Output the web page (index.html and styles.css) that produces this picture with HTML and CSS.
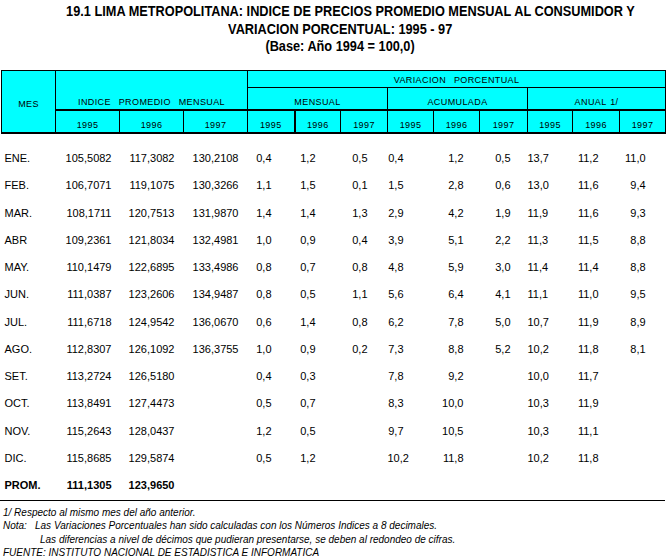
FILE: index.html
```html
<!DOCTYPE html>
<html lang="es">
<head>
<meta charset="utf-8">
<title>19.1 Lima Metropolitana: Indice de Precios</title>
<link rel="stylesheet" href="styles.css">
</head>
<body>
<div class="title">
  <div class="tline t1"><span>19.1 LIMA METROPOLITANA: INDICE DE PRECIOS PROMEDIO MENSUAL AL CONSUMIDOR Y</span></div>
  <div class="tline"><span>VARIACION PORCENTUAL: 1995 - 97</span></div>
  <div class="tline"><span>(Base: Año 1994 = 100,0)</span></div>
</div>
<table class="grid">
  <colgroup>
    <col class="c-mes"><col class="c-idx"><col class="c-idx"><col class="c-idx">
    <col class="c-47"><col class="c-46"><col class="c-47">
    <col class="c-46"><col class="c-46"><col class="c-48">
    <col class="c-45"><col class="c-47"><col class="c-46">
  </colgroup>
  <thead>
    <tr class="h1">
      <th rowspan="3" class="mes">MES</th>
      <th rowspan="2" colspan="3" class="ipm">INDICE&nbsp; PROMEDIO&nbsp; MENSUAL</th>
      <th colspan="9" class="vp">VARIACION&nbsp; PORCENTUAL</th>
    </tr>
    <tr class="h2">
      <th colspan="3">MENSUAL</th>
      <th colspan="3">ACUMULADA</th>
      <th colspan="3">ANUAL 1/</th>
    </tr>
    <tr class="h3">
      <th>1995</th><th>1996</th><th>1997</th>
      <th class="thick">1995</th><th>1996</th><th>1997</th>
      <th>1995</th><th>1996</th><th>1997</th>
      <th>1995</th><th>1996</th><th>1997</th>
    </tr>
  </thead>
  <tbody>
    <tr class="spacer"><td colspan="13"></td></tr>
    <tr><td>ENE.</td><td>105,5082</td><td>117,3082</td><td>130,2108</td><td>0,4</td><td>1,2</td><td>0,5</td><td>0,4</td><td>1,2</td><td>0,5</td><td>13,7</td><td>11,2</td><td>11,0</td></tr>
    <tr><td>FEB.</td><td>106,7071</td><td>119,1075</td><td>130,3266</td><td>1,1</td><td>1,5</td><td>0,1</td><td>1,5</td><td>2,8</td><td>0,6</td><td>13,0</td><td>11,6</td><td>9,4</td></tr>
    <tr><td>MAR.</td><td>108,1711</td><td>120,7513</td><td>131,9870</td><td>1,4</td><td>1,4</td><td>1,3</td><td>2,9</td><td>4,2</td><td>1,9</td><td>11,9</td><td>11,6</td><td>9,3</td></tr>
    <tr><td>ABR</td><td>109,2361</td><td>121,8034</td><td>132,4981</td><td>1,0</td><td>0,9</td><td>0,4</td><td>3,9</td><td>5,1</td><td>2,2</td><td>11,3</td><td>11,5</td><td>8,8</td></tr>
    <tr><td>MAY.</td><td>110,1479</td><td>122,6895</td><td>133,4986</td><td>0,8</td><td>0,7</td><td>0,8</td><td>4,8</td><td>5,9</td><td>3,0</td><td>11,4</td><td>11,4</td><td>8,8</td></tr>
    <tr><td>JUN.</td><td>111,0387</td><td>123,2606</td><td>134,9487</td><td>0,8</td><td>0,5</td><td>1,1</td><td>5,6</td><td>6,4</td><td>4,1</td><td>11,1</td><td>11,0</td><td>9,5</td></tr>
    <tr><td>JUL.</td><td>111,6718</td><td>124,9542</td><td>136,0670</td><td>0,6</td><td>1,4</td><td>0,8</td><td>6,2</td><td>7,8</td><td>5,0</td><td>10,7</td><td>11,9</td><td>8,9</td></tr>
    <tr><td>AGO.</td><td>112,8307</td><td>126,1092</td><td>136,3755</td><td>1,0</td><td>0,9</td><td>0,2</td><td>7,3</td><td>8,8</td><td>5,2</td><td>10,2</td><td>11,8</td><td>8,1</td></tr>
    <tr><td>SET.</td><td>113,2724</td><td>126,5180</td><td></td><td>0,4</td><td>0,3</td><td></td><td>7,8</td><td>9,2</td><td></td><td>10,0</td><td>11,7</td><td></td></tr>
    <tr><td>OCT.</td><td>113,8491</td><td>127,4473</td><td></td><td>0,5</td><td>0,7</td><td></td><td>8,3</td><td>10,0</td><td></td><td>10,3</td><td>11,9</td><td></td></tr>
    <tr><td>NOV.</td><td>115,2643</td><td>128,0437</td><td></td><td>1,2</td><td>0,5</td><td></td><td>9,7</td><td>10,5</td><td></td><td>10,3</td><td>11,1</td><td></td></tr>
    <tr><td>DIC.</td><td>115,8685</td><td>129,5874</td><td></td><td>0,5</td><td>1,2</td><td></td><td>10,2</td><td>11,8</td><td></td><td>10,2</td><td>11,8</td><td></td></tr>
    <tr class="prom"><td>PROM.</td><td>111,1305</td><td>123,9650</td><td></td><td></td><td></td><td></td><td></td><td></td><td></td><td></td><td></td><td></td></tr>
  </tbody>
</table>
<div class="rule"></div>
<div class="notes">
  <div class="note">1/ Respecto al mismo mes del año anterior.</div>
  <div class="note nota"><span class="lbl">Nota:</span><span>Las Variaciones Porcentuales han sido calculadas con los Números Indices a 8 decimales.</span></div>
  <div class="note indent">Las diferencias a nivel de décimos que pudieran presentarse, se deben al redondeo de cifras.</div>
  <div class="note">FUENTE: INSTITUTO NACIONAL DE ESTADISTICA E INFORMATICA</div>
</div>
</body>
</html>
```

FILE: styles.css
```css
html, body {
  margin: 0;
  padding: 0;
  background: #ffffff;
  color: #000000;
  font-family: "Liberation Sans", Arial, sans-serif;
}

.title {
  margin-top: 3px;
  padding-left: 13px;
  text-align: center;
  font-family: "Liberation Sans", Arial, sans-serif;
  font-weight: bold;
  font-size: 14px;
  line-height: 17.5px;
  white-space: nowrap;
}

.tline span {
  display: inline-block;
  transform: scaleX(0.91);
  transform-origin: center;
}

.title .t1 {
  padding-left: 20px;
}

.grid {
  margin: 14px 0 0 1px;
  border-collapse: collapse;
  table-layout: fixed;
  width: 664px;
}

.c-mes { width: 54px; }
.c-idx { width: 64px; }
.c-45 { width: 45px; }
.c-46 { width: 46px; }
.c-47 { width: 47px; }
.c-48 { width: 48px; }

.grid thead th {
  background: #00ffff;
  border: 1px solid #000000;
  font-weight: normal;
  font-size: 9px;
  letter-spacing: 0.4px;
  word-spacing: 1px;
  padding: 0;
  text-align: center;
  white-space: nowrap;
  line-height: 9px;
  color: #000;
}

.grid .h1 { height: 17px; }
.grid .h2 { height: 23px; }
.grid .h3 { height: 23px; }

.grid .h2 th { vertical-align: bottom; padding-bottom: 2px; border-bottom: 2px solid #000; }
.grid .h3 th { vertical-align: bottom; padding-bottom: 2px; border-bottom: 2px solid #000; }

.grid th.mes { vertical-align: middle; padding-top: 6px; border-bottom: 2px solid #000; }
.grid th.ipm { vertical-align: bottom; padding-bottom: 2px; border-bottom: 2px solid #000; }
.grid th.vp { vertical-align: middle; padding-top: 4px; }
.grid th.thick { border-right: 2px solid #000; }

.grid tbody td {
  font-size: 11px;
  height: 27.25px;
  padding: 0;
  text-align: right;
  vertical-align: middle;
  white-space: nowrap;
  line-height: 12px;
}

.grid tbody tr.spacer td { height: 10.5px; }

.grid tbody td:nth-child(1) { text-align: left; padding-left: 3px; }
.grid tbody td:nth-child(2) { padding-right: 8px; }
.grid tbody td:nth-child(3) { padding-right: 9px; }
.grid tbody td:nth-child(4) { padding-right: 9px; }
.grid tbody td:nth-child(5) { padding-right: 23px; }
.grid tbody td:nth-child(6) { padding-right: 25px; }
.grid tbody td:nth-child(7) { padding-right: 20px; }
.grid tbody td:nth-child(8) { padding-right: 30px; }
.grid tbody td:nth-child(9) { padding-right: 16px; }
.grid tbody td:nth-child(10) { padding-right: 17px; }
.grid tbody td:nth-child(11) { padding-right: 25px; }
.grid tbody td:nth-child(12) { padding-right: 21px; }
.grid tbody td:nth-child(13) { padding-right: 20px; }

.grid tr.prom td { font-weight: bold; }

.rule {
  margin-top: 1px;
  width: 665px;
  border-top: 1px solid #000000;
}

.notes {
  margin-top: 5px;
  font-size: 10px;
  font-style: italic;
  line-height: 13.5px;
  padding-left: 3px;
}

.note { white-space: nowrap; }
.nota { display: flex; }
.nota .lbl { width: 32px; }
.indent { padding-left: 37px; }
```
